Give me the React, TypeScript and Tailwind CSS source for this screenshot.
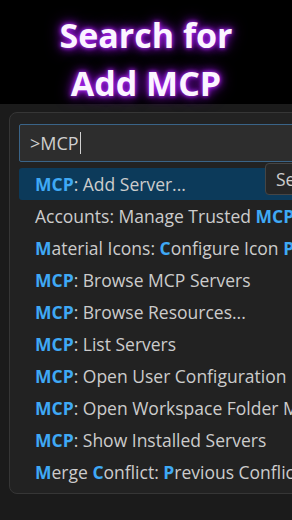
import React from "react";

type Seg = { t: string; h?: boolean };

const rows: Seg[][] = [
  [{ t: "MCP", h: true }, { t: ": Add Server..." }],
  [{ t: "Accounts: Manage Trusted " }, { t: "MCP", h: true }, { t: " Servers" }],
  [{ t: "M", h: true }, { t: "aterial Icons: " }, { t: "C", h: true }, { t: "onfigure Icon " }, { t: "P", h: true }, { t: "ack" }],
  [{ t: "MCP", h: true }, { t: ": Browse MCP Servers" }],
  [{ t: "MCP", h: true }, { t: ": Browse Resources..." }],
  [{ t: "MCP", h: true }, { t: ": List Servers" }],
  [{ t: "MCP", h: true }, { t: ": Open User Configuration" }],
  [{ t: "MCP", h: true }, { t: ": Open Workspace Folder MCP" }],
  [{ t: "MCP", h: true }, { t: ": Show Installed Servers" }],
  [{ t: "M", h: true }, { t: "erge " }, { t: "C", h: true }, { t: "onflict: " }, { t: "P", h: true }, { t: "revious Conflict" }],
];

export default function App() {
  return (
    <div
      className="w-[292px] h-[520px] bg-[#1b1b1b] overflow-hidden flex flex-col"
      style={{ fontFamily: '"Open Sans", "Noto Sans", sans-serif' }}
    >
      <div
        className="h-[104px] shrink-0 bg-black flex flex-col items-center justify-center pt-[13px] text-[#fbf4ff] font-bold text-[34px] leading-[48px] [text-shadow:0_0_4px_#b52cff,0_0_10px_#9a18e8,0_0_16px_#6a0aa8]"
        style={{ fontFamily: '"Open Sans", sans-serif' }}
      >
        <div>Search for</div>
        <div>Add MCP</div>
      </div>
      <div className="relative flex-1 pt-[8px] pl-[9px]">
        <div className="w-[310px] rounded-lg border border-[#363636] bg-[#222222] pl-[9px] pt-[11px] pb-[5px]">
          <div className="h-[38px] border border-[#3a6488] bg-[#2d2d2d] rounded-[2px] flex items-center pl-[10px] text-[18px] text-[#cfcfcf]">
            <span>&gt;MCP</span>
            <span className="w-[1.5px] h-[22px] bg-[#d0d0d0] ml-[1px]" />
          </div>
          <div className="mt-[6px] flex flex-col">
            {rows.map((r, i) => (
              <div
                key={i}
                className={`h-[32px] flex items-center pl-[16px] text-[17.5px] whitespace-nowrap text-[#cccccc] ${i === 0 ? "bg-[#0c3a5a] rounded-[3px]" : ""}`}
              >
                <span className="whitespace-pre">
                  {r.map((s, j) => (
                    <span key={j} className={s.h ? "text-[#3fa9f5] font-bold" : ""}>
                      {s.t}
                    </span>
                  ))}
                </span>
              </div>
            ))}
          </div>
        </div>
        <div className="absolute left-[265px] top-[59px] w-[60px] h-[32px] rounded-[4px] border border-[#454545] bg-[#262626] flex items-center pl-[10px] text-[17.5px] text-[#cccccc]">
          Search
        </div>
      </div>
    </div>
  );
}
